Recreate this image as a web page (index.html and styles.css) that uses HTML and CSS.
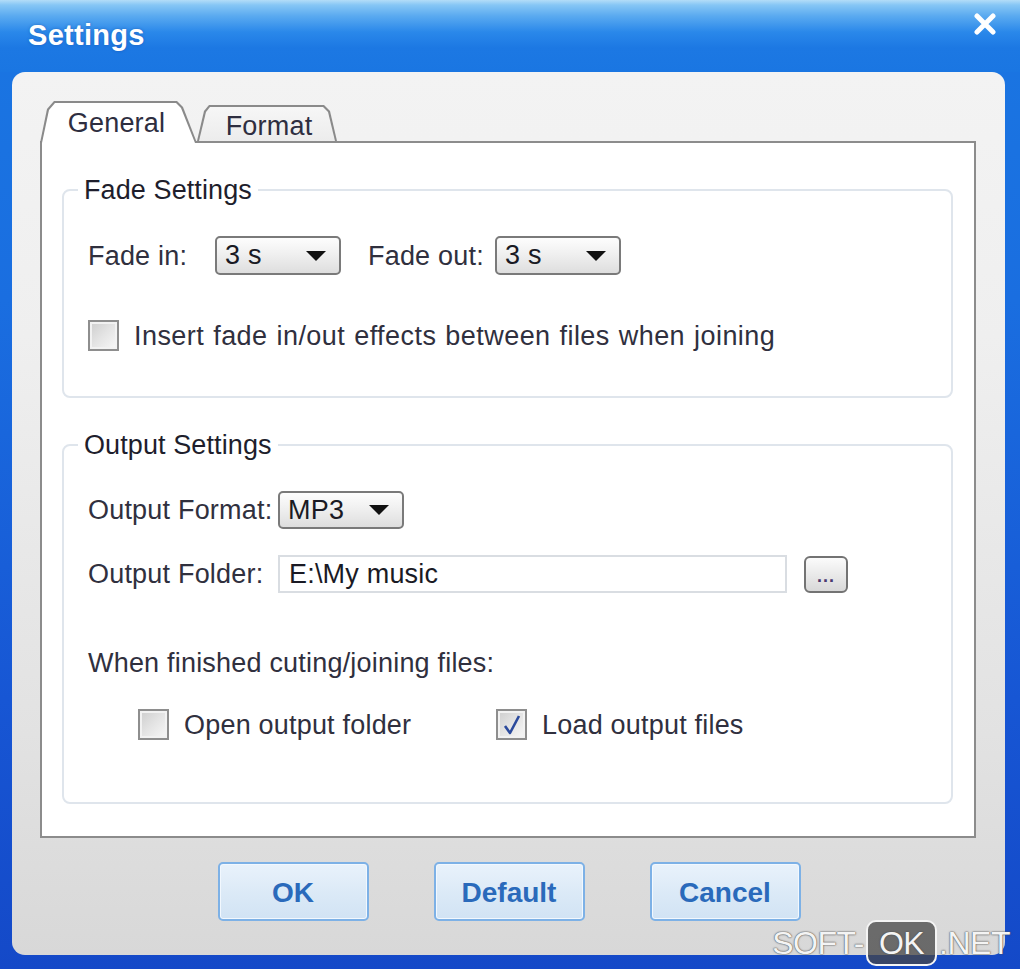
FILE: index.html
```html
<!DOCTYPE html>
<html>
<head>
<meta charset="utf-8">
<title>Settings</title>
<link rel="stylesheet" href="styles.css">
</head>
<body>
<div class="window">
  <div class="titlebar">
    <span class="title">Settings</span>
    <svg class="close" width="22" height="22" viewBox="0 0 22 22"><path d="M3 3 L19 19 M19 3 L3 19" stroke="#fff" stroke-width="5" stroke-linecap="round"/></svg>
  </div>
  <div class="body">
    <div class="tabs">
      <div class="tab tab-general active"><span>General</span></div>
      <div class="tab tab-format"><span>Format</span></div>
    </div>
    <div class="tabpanel">
      <fieldset class="group group-fade">
        <legend>Fade Settings</legend>
        <div class="content">
          <div class="row row-fade">
            <span class="lbl lbl-fade">Fade in:</span>
            <div class="select"><span>3 s</span><i class="arrow"></i></div>
            <span class="lbl lbl-fadeout">Fade out:</span>
            <div class="select"><span>3 s</span><i class="arrow"></i></div>
          </div>
          <div class="check check-insert"><span class="box"></span><span class="insert-text">Insert fade in/out effects between files when joining</span></div>
        </div>
      </fieldset>
      <fieldset class="group group-output">
        <legend>Output Settings</legend>
        <div class="content">
          <div class="row row-format">
            <span class="lbl lbl-out">Output Format:</span>
            <div class="select"><span>MP3</span><i class="arrow"></i></div>
          </div>
          <div class="row row-folder">
            <span class="lbl lbl-out">Output Folder:</span>
            <div class="input">E:\My music</div>
            <div class="browse">...</div>
          </div>
          <div class="when">When finished cuting/joining files:</div>
          <div class="row row-checks">
            <div class="check check-open"><span class="box"></span><span>Open output folder</span></div>
            <div class="check check-load"><span class="box checked"><svg width="22" height="24" viewBox="0 0 22 24"><path d="M4 13 L9 20 L18 3" fill="none" stroke="#2b4a9c" stroke-width="2.6" stroke-linejoin="round"/></svg></span><span>Load output files</span></div>
          </div>
        </div>
      </fieldset>
    </div>
    <div class="buttons">
      <div class="btn">OK</div>
      <div class="btn">Default</div>
      <div class="btn">Cancel</div>
    </div>
  </div>
  <div class="watermark">SOFT-<span class="wm-ok">OK</span>.NET</div>
</div>
</body>
</html>
```
FILE: styles.css
```css
html, body {
  margin: 0;
  padding: 0;
}
body {
  font-family: "Liberation Sans", Arial, sans-serif;
  background: #1552d0;
}
.window {
  width: 1020px;
  height: 969px;
  position: relative;
  overflow: hidden;
  display: flex;
  flex-direction: column;
  background: linear-gradient(to bottom, #1a76e2 0, #1a6ee0 300px, #1756d4 700px, #1449c8 100%);
}
.titlebar {
  height: 72px;
  flex: none;
  box-sizing: border-box;
  display: flex;
  justify-content: space-between;
  align-items: flex-start;
  padding: 0 24px 0 28px;
  background: linear-gradient(to bottom, #b3ddf8 0, #86c6f5 5px, #5aaaf0 16px, #2a88ea 32px, #1c78e3 48px, #1a76e2 72px);
}
.title {
  margin-top: 17px;
  font-size: 29px;
  line-height: 36px;
  font-weight: bold;
  color: #fff;
  letter-spacing: 0.3px;
  text-shadow: 0 0 3px rgba(20, 60, 140, 0.45);
}
.close {
  margin-top: 13px;
}
.body {
  flex: 1;
  margin: 0 15px 14px 12px;
  border-radius: 13px;
  background: linear-gradient(to bottom, #f3f3f3 0, #efefef 30%, #e2e2e2 75%, #d8d8d8 100%);
  box-sizing: border-box;
  padding: 29px 29px 0 28px;
  display: flex;
  flex-direction: column;
  color: #30303e;
}
.tabs {
  display: flex;
  align-items: flex-end;
  height: 40px;
  position: relative;
  z-index: 2;
}
.tab {
  position: relative;
  isolation: isolate;
  display: flex;
  justify-content: center;
  font-size: 27px;
  letter-spacing: 0.2px;
  color: #2e2e40;
  box-sizing: border-box;
}
.tab::before, .tab::after {
  content: "";
  position: absolute;
  inset: 0;
  z-index: -1;
}
.tab-general {
  width: 157px;
  height: 42px;
  margin-bottom: -2px;
  padding-top: 7px;
  padding-right: 4px;
}
.tab-general::before {
  background: #8a8a8a;
  clip-path: polygon(0 100%, 7px 8px, 14px 0, 137px 0, 143px 6px, 157px 100%);
}
.tab-general::after {
  background: #ffffff;
  clip-path: polygon(2px 100%, 9px 9px, 15px 2px, 136px 2px, 141px 7px, 155px 100%);
}
.tab-format {
  width: 140px;
  height: 36px;
  padding-top: 6px;
  padding-left: 4px;
  z-index: -1;
}
.tab-format::before {
  background: #8a8a8a;
  clip-path: polygon(0 100%, 7px 6px, 12px 0, 127px 0, 133px 6px, 140px 100%);
}
.tab-format::after {
  background: linear-gradient(#f7f7f7, #ececec);
  clip-path: polygon(2px 100%, 9px 7px, 13px 2px, 126px 2px, 131px 7px, 138px 100%);
}
.tabpanel {
  height: 697px;
  box-sizing: border-box;
  border: 2px solid #8c8c8c;
  background: #ffffff;
  padding: 32px 21px 0 20px;
  position: relative;
  z-index: 1;
}
.group {
  margin: 0;
  padding: 0;
  border: 2px solid #dfe5ec;
  border-radius: 8px;
  min-inline-size: 0;
}
.group legend {
  margin-left: 14px;
  padding: 0 6px;
  font-size: 27px;
  line-height: 30px;
  letter-spacing: 0.1px;
  color: #1e1e2c;
}
.group-output {
  margin-top: 32px;
}
.content {
  padding: 0 24px;
  font-size: 27px;
  letter-spacing: 0.2px;
}
.row {
  display: flex;
  align-items: center;
}
.lbl {
  line-height: 30px;
  flex: none;
}
.lbl-fade {
  width: 127px;
}
.lbl-fadeout {
  width: 127px;
  margin-left: 27px;
}
.lbl-out {
  width: 190px;
}
.row-fade {
  margin-top: 31px;
}
.select {
  width: 126px;
  height: 39px;
  box-sizing: border-box;
  border: 2px solid #7a7a7a;
  border-radius: 5px;
  background: linear-gradient(to bottom, #fdfdfd 0, #f0f0f0 45%, #dedede 100%);
  display: flex;
  align-items: center;
  justify-content: space-between;
  padding: 0 13px 0 8px;
  color: #1a1a24;
}
.arrow {
  width: 0;
  height: 0;
  border-left: 10px solid transparent;
  border-right: 10px solid transparent;
  border-top: 10px solid #111;
}
.check {
  display: flex;
  align-items: center;
  line-height: 30px;
}
.check-insert {
  margin-top: 45px;
  margin-bottom: 45px;
}
.insert-text {
  word-spacing: 1px;
  letter-spacing: 0.45px;
}
.box {
  width: 31px;
  height: 31px;
  box-sizing: border-box;
  border: 2px solid #8e8e8e;
  background: linear-gradient(135deg, #cdcdcd 0, #e4e4e4 50%, #f8f8f8 100%);
  box-shadow: inset 0 0 0 2px #f2f2f2;
  margin-right: 15px;
  flex: none;
  display: flex;
  align-items: center;
  justify-content: center;
}
.row-format {
  margin-top: 31px;
}
.row-format .select {
  height: 38px;
}
.row-folder {
  margin-top: 26px;
}
.input {
  width: 509px;
  height: 38px;
  box-sizing: border-box;
  border: 2px solid #d9dde2;
  background: #fff;
  padding-left: 9px;
  line-height: 34px;
  color: #1a1a24;
}
.browse {
  width: 44px;
  height: 37px;
  box-sizing: border-box;
  margin-left: 17px;
  border: 2px solid #737373;
  border-radius: 6px;
  background: linear-gradient(to bottom, #fbfbfb, #e8e8e8 55%, #d8d8d8);
  display: flex;
  justify-content: center;
  align-items: flex-end;
  font-size: 18px;
  line-height: 18px;
  font-weight: bold;
  color: #4a3a70;
  padding-bottom: 6px;
  letter-spacing: 1px;
}
.when {
  margin-top: 55px;
  line-height: 30px;
}
.row-checks {
  margin-top: 31px;
  margin-bottom: 62px;
}
.check-open {
  margin-left: 50px;
  width: 358px;
}
.buttons {
  margin-top: 24px;
  display: flex;
  justify-content: center;
  gap: 65px;
  padding-left: 2px;
}
.btn {
  width: 151px;
  height: 59px;
  box-sizing: border-box;
  border: 2px solid #7db1e6;
  border-radius: 5px;
  background: linear-gradient(to bottom, #e9f2fb 0, #dceaf7 50%, #d1e3f4 100%);
  box-shadow: inset 0 0 0 1px #f2f8fe;
  display: flex;
  align-items: center;
  justify-content: center;
  font-size: 28px;
  font-weight: bold;
  color: #2a6abb;
  padding-top: 3px;
}
.watermark {
  position: absolute;
  right: 10px;
  bottom: 3px;
  display: flex;
  align-items: center;
  font-size: 32px;
  line-height: 44px;
  color: #f4f4f4;
  text-shadow: 0 0 2px #555, 0 0 1px #444;
  letter-spacing: -0.5px;
}
.wm-ok {
  display: inline-block;
  padding: 0 11px;
  margin: 0 2px;
  border: 2px solid #f4f4f4;
  border-radius: 10px;
  background: rgba(70, 70, 70, 0.75);
  line-height: 42px;
}
```
